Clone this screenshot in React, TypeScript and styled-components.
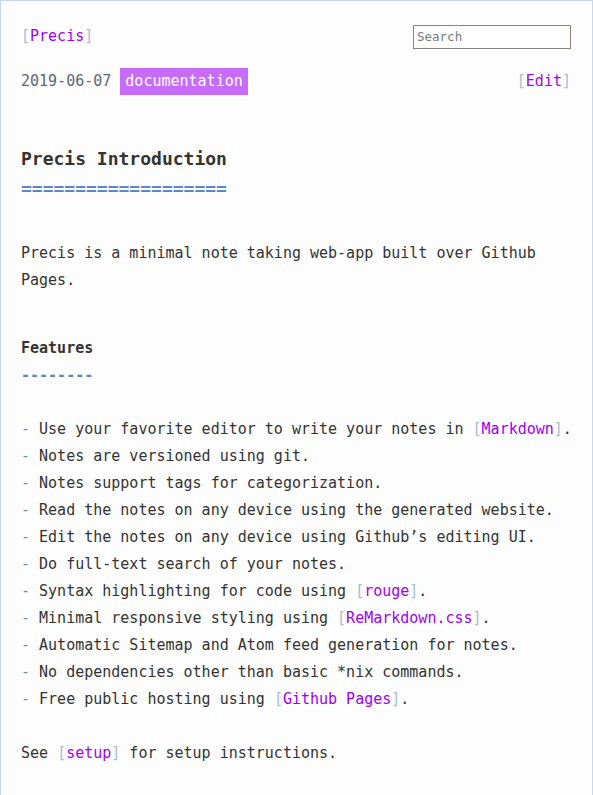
import React from "react";
import styled, { createGlobalStyle } from "styled-components";

const Global = createGlobalStyle`
  html, body { margin: 0; padding: 0; background: #fdfdfd; }
  body { font-family: "DejaVu Sans Mono", "Liberation Mono", monospace; color: #333; }
  * { box-sizing: border-box; }
`;

const Frame = styled.div`
  min-height: 100vh;
  border-top: 1px solid #c6d8ea;
  border-left: 1px solid #c6d8ea;
  border-right: 1px solid #c6d8ea;
  background: #fdfdfd;
  padding: 0 20px 0 20px;
  font-size: 15px;
  line-height: 27px;
`;

const Header = styled.header`
  display: flex;
  justify-content: space-between;
  align-items: center;
  margin-top: 22px;
  height: 27px;
`;

const Bracket = styled.span`
  color: #a9bcd3;
`;

const Link = styled.a`
  color: #a100f2;
  text-decoration: none;
`;

const SearchInput = styled.input`
  width: 158px;
  height: 24px;
  border: 1px solid #8b8278;
  background: #fff;
  padding: 0 3px;
  font-family: "DejaVu Sans Mono", monospace;
  font-size: 12.5px;
  color: #333;
  margin-right: 1px;
  &::placeholder { color: #7a7a7a; }
  outline: none;
`;

const MetaRow = styled.div`
  display: flex;
  justify-content: space-between;
  align-items: center;
  margin-top: 18px;
  height: 27px;
`;

const DateText = styled.span`
  color: #5d6878;
  white-space: pre;
`;

const Tag = styled.span`
  display: inline-block;
  background: #c76cf9;
  color: #fff;
  padding: 0 5px;
  line-height: 27px;
`;

const EditLink = styled.span`
  margin-right: 1px;
`;

const H1 = styled.h1`
  margin: 49px 0 0;
  font-size: 18px;
  line-height: 30px;
  font-weight: bold;
  color: #333;
`;

const Rule = styled.div<{ $size: number; $lh: number }>`
  color: #5b87c4;
  font-size: ${(p) => p.$size}px;
  line-height: ${(p) => p.$lh}px;
  font-weight: bold;
  white-space: pre;
`;

const Para = styled.p`
  margin: 36px 0 0;
  max-width: 540px;
`;

const H2 = styled.h2`
  margin: 41px 0 0;
  font-size: 15px;
  line-height: 27px;
  font-weight: bold;
  color: #333;
`;

const List = styled.ul`
  list-style: none;
  margin: 27px 0 0;
  padding: 0;
`;

const Item = styled.li`
  white-space: pre;
`;

const Dash = styled.span`
  color: #6f8db8;
`;

const Footer = styled.p`
  margin: 27px 0 0;
`;

const MdLink = ({ children }: { children: React.ReactNode }) => (
  <>
    <Bracket>[</Bracket>
    <Link href="#">{children}</Link>
    <Bracket>]</Bracket>
  </>
);

const items: React.ReactNode[] = [
  <>Use your favorite editor to write your notes in <MdLink>Markdown</MdLink>.</>,
  <>Notes are versioned using git.</>,
  <>Notes support tags for categorization.</>,
  <>Read the notes on any device using the generated website.</>,
  <>Edit the notes on any device using Github’s editing UI.</>,
  <>Do full-text search of your notes.</>,
  <>Syntax highlighting for code using <MdLink>rouge</MdLink>.</>,
  <>Minimal responsive styling using <MdLink>ReMarkdown.css</MdLink>.</>,
  <>Automatic Sitemap and Atom feed generation for notes.</>,
  <>No dependencies other than basic *nix commands.</>,
  <>Free public hosting using <MdLink>Github Pages</MdLink>.</>,
];

export default function App() {
  return (
    <>
      <Global />
      <Frame>
        <Header>
          <span>
            <MdLink>Precis</MdLink>
          </span>
          <SearchInput placeholder="Search" />
        </Header>
        <MetaRow>
          <span>
            <DateText>2019-06-07 </DateText>
            <Tag>documentation</Tag>
          </span>
          <EditLink>
            <MdLink>Edit</MdLink>
          </EditLink>
        </MetaRow>
        <H1>Precis Introduction</H1>
        <Rule $size={18} $lh={30}>===================</Rule>
        <Para>
          Precis is a minimal note taking web-app built over Github Pages.
        </Para>
        <H2>Features</H2>
        <Rule $size={15} $lh={27}>--------</Rule>
        <List>
          {items.map((it, i) => (
            <Item key={i}>
              <Dash>-</Dash> {it}
            </Item>
          ))}
        </List>
        <Footer>
          See <MdLink>setup</MdLink> for setup instructions.
        </Footer>
      </Frame>
    </>
  );
}
